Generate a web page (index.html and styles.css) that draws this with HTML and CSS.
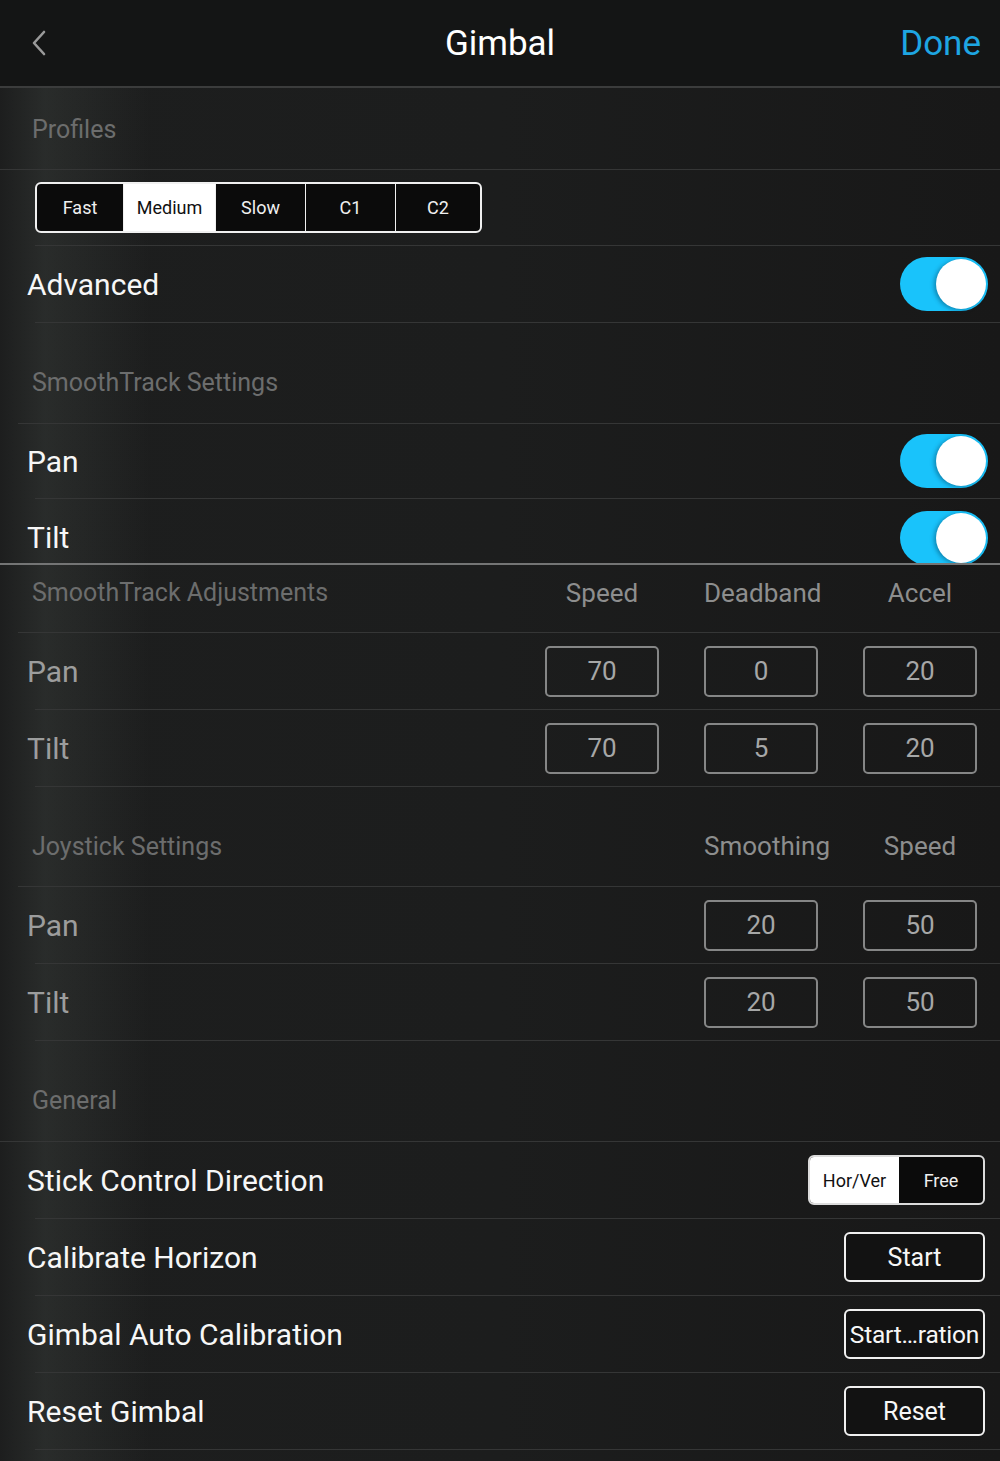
FILE: index.html
```html
<!DOCTYPE html>
<html lang="en">
<head>
  <meta charset="UTF-8">
  <meta name="viewport" content="width=device-width, initial-scale=1.0">
  <title>Gimbal</title>
  <link rel="stylesheet" href="styles.css">
</head>
<body>

  <div class="header">
    <div class="back">
      <svg width="16" height="26" viewBox="0 0 16 26">
        <path d="M13 2 L3 13 L13 24" fill="none" stroke="#9a9a9a" stroke-width="2.6" stroke-linecap="round" stroke-linejoin="round"/>
      </svg>
    </div>
    <div class="title">Gimbal</div>
    <div class="done">Done</div>
  </div>

  <div class="list">
    <div class="section-head profiles full-line">Profiles</div>

    <div class="row seg-row">
      <div class="segmented profiles-seg">
        <div class="seg">Fast</div>
        <div class="seg active">Medium</div>
        <div class="seg">Slow</div>
        <div class="seg">C1</div>
        <div class="seg">C2</div>
      </div>
    </div>

    <div class="row">
      <span class="label">Advanced</span>
      <div class="toggle on"><div class="knob"></div></div>
    </div>

    <div class="section-head tall short-line">SmoothTrack Settings</div>

    <div class="row row-75">
      <span class="label">Pan</span>
      <div class="toggle on"><div class="knob"></div></div>
    </div>

    <div class="clip">
      <div class="row no-line">
        <span class="label">Tilt</span>
        <div class="toggle on"><div class="knob"></div></div>
      </div>
    </div>
    <div class="split"></div>

    <div class="grid-head adj short-line">
      <span class="head-title">SmoothTrack Adjustments</span>
      <span class="col-head c2">Speed</span>
      <span class="col-head c3">Deadband</span>
      <span class="col-head c4">Accel</span>
    </div>

    <div class="grid-row">
      <span class="label dim">Pan</span>
      <div class="box c2">70</div>
      <div class="box c3">0</div>
      <div class="box c4">20</div>
    </div>
    <div class="grid-row">
      <span class="label dim">Tilt</span>
      <div class="box c2">70</div>
      <div class="box c3">5</div>
      <div class="box c4">20</div>
    </div>

    <div class="grid-head joy short-line">
      <span class="head-title">Joystick Settings</span>
      <span class="col-head c3">Smoothing</span>
      <span class="col-head c4">Speed</span>
    </div>

    <div class="grid-row">
      <span class="label dim">Pan</span>
      <div class="box c3">20</div>
      <div class="box c4">50</div>
    </div>
    <div class="grid-row">
      <span class="label dim">Tilt</span>
      <div class="box c3">20</div>
      <div class="box c4">50</div>
    </div>

    <div class="section-head tall full-line">General</div>

    <div class="row btn-row">
      <span class="label">Stick Control Direction</span>
      <div class="segmented stick-seg">
        <div class="seg active">Hor/Ver</div>
        <div class="seg">Free</div>
      </div>
    </div>
    <div class="row btn-row">
      <span class="label">Calibrate Horizon</span>
      <div class="btn">Start</div>
    </div>
    <div class="row btn-row">
      <span class="label">Gimbal Auto Calibration</span>
      <div class="btn tight">Start…ration</div>
    </div>
    <div class="row btn-row">
      <span class="label">Reset Gimbal</span>
      <div class="btn">Reset</div>
    </div>
  </div>

</body>
</html>
```

FILE: styles.css
```css
body {
  font-family: Roboto, "Liberation Sans", sans-serif;
  margin: 0;
  padding: 0;
  width: 1000px;
  height: 1461px;
  overflow: hidden;
  color: #f4f4f4;
  background-color: #1b1c1c;
  background-image:
    linear-gradient(90deg, rgba(0,0,0,0) 0, rgba(70,76,72,0.3) 45px, rgba(0,0,0,0) 150px),
    linear-gradient(90deg, #1d1e1e 0, #1c1d1d 50%, #181818 100%);
}

.header {
  height: 86px;
  background-color: #141515;
  border-bottom: 2px solid #3b3c3c;
  display: grid;
  grid-template-columns: 1fr auto 1fr;
  align-items: center;
  padding: 0 19px;
}

.back {
  display: flex;
  align-items: center;
  padding-left: 12px;
}

.title {
  font-size: 35px;
  color: #ffffff;
}

.done {
  font-size: 35px;
  color: #1ea6e2;
  text-align: right;
}

.list {
  display: flex;
  flex-direction: column;
}

/* section headers */

.section-head {
  height: 82px;
  display: flex;
  align-items: center;
  padding-left: 32px;
  padding-top: 2px;
  font-size: 25px;
  color: #6c6d6d;
  box-sizing: border-box;
}

.section-head.tall {
  height: 101px;
  padding-top: 19px;
}

.full-line {
  border-bottom: 1px solid #353636;
}

.short-line {
  border-bottom: 1px solid #353636;
  margin-left: 18px;
  padding-left: 14px !important;
}

/* plain rows */

.row {
  height: 77px;
  box-sizing: border-box;
  display: flex;
  align-items: center;
  justify-content: space-between;
  margin-left: 35px;
  padding: 0 12px 0 0;
  border-bottom: 1px solid #353636;
}

.row .label {
  margin-left: -8px;
}

.row-75 {
  height: 75px;
}

.seg-row {
  height: 76px;
  justify-content: flex-start;
}

.btn-row {
  padding-right: 15px;
}

.no-line {
  border-bottom: none;
}

.clip {
  height: 64px;
  overflow: hidden;
}

.split {
  height: 2px;
  background-color: #747575;
}

.label {
  font-size: 30px;
  color: #f7f7f7;
}

.label.dim {
  color: #9c9d9d;
}

/* segmented controls */

.segmented {
  display: flex;
  border: 2px solid #f0f0f0;
  border-radius: 6px;
  overflow: hidden;
  background-color: #0b0b0b;
  box-sizing: border-box;
}

.seg {
  display: flex;
  align-items: center;
  justify-content: center;
  font-size: 18px;
  color: #f0f0f0;
  border-left: 1px solid #f0f0f0;
}

.seg:first-child {
  border-left: none;
}

.seg.active {
  background-color: #ffffff;
  color: #111111;
}

.profiles-seg {
  height: 51px;
  width: 447px;
}

.profiles-seg .seg:nth-child(1) { width: 86px; }
.profiles-seg .seg:nth-child(2) { width: 91px; }
.profiles-seg .seg:nth-child(3) { width: 89px; }
.profiles-seg .seg:nth-child(4) { width: 89px; }
.profiles-seg .seg:nth-child(5) { flex: 1; }

.stick-seg {
  height: 50px;
  width: 177px;
  border-color: #dcdcdc;
}

.stick-seg .seg {
  border-left: none;
}

.stick-seg .seg:nth-child(1) { width: 89px; }
.stick-seg .seg:nth-child(2) { flex: 1; }

/* toggle */

.toggle {
  width: 88px;
  height: 54px;
  border-radius: 27px;
  background-color: #19c3fb;
  position: relative;
}

.knob {
  position: absolute;
  top: 2px;
  right: 2px;
  width: 50px;
  height: 50px;
  border-radius: 50%;
  background-color: #ffffff;
  box-shadow: -2px 1px 4px rgba(0, 60, 90, 0.45);
}

/* value grids */

.grid-head,
.grid-row {
  display: grid;
  grid-template-columns: 1fr 114px 114px 114px;
  column-gap: 45px;
  align-items: center;
  padding-right: 23px;
  box-sizing: border-box;
}

.grid-head {
  padding-left: 14px;
}

.grid-head.adj {
  height: 68px;
  padding-bottom: 12px;
}

.grid-head.joy {
  height: 100px;
  padding-top: 19px;
}

.head-title {
  grid-column: 1;
  font-size: 25px;
  color: #6c6d6d;
}

.col-head {
  font-size: 26px;
  color: #8d8e8e;
  text-align: center;
  white-space: nowrap;
}

.c2 { grid-column: 2; }
.c3 { grid-column: 3; }
.c4 { grid-column: 4; }

.grid-row {
  height: 77px;
  margin-left: 35px;
  border-bottom: 1px solid #353636;
}

.grid-row .label {
  grid-column: 1;
  margin-left: -8px;
}

.box {
  height: 51px;
  border: 2px solid #858686;
  border-radius: 5px;
  box-sizing: border-box;
  display: flex;
  align-items: center;
  justify-content: center;
  font-size: 26px;
  color: #a6a7a7;
}

/* buttons */

.btn {
  width: 141px;
  height: 50px;
  border: 2px solid #f0f0f0;
  border-radius: 6px;
  box-sizing: border-box;
  display: flex;
  align-items: center;
  justify-content: center;
  font-size: 25px;
  color: #f7f7f7;
  background-color: #121212;
}

.btn.tight {
  font-size: 24.5px;
  letter-spacing: -0.2px;
  white-space: nowrap;
  overflow: hidden;
}
```
